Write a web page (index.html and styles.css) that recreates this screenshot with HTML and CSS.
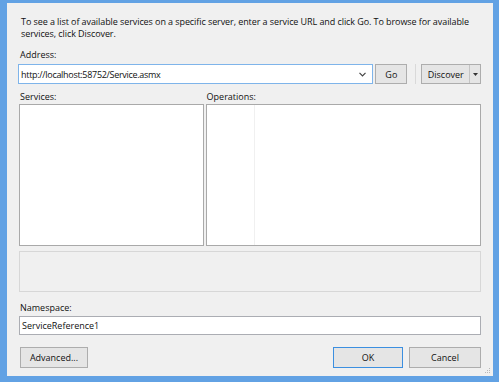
FILE: index.html
```html
<!DOCTYPE html>
<html lang="en">
<head>
  <meta charset="UTF-8">
  <title>Add Service Reference</title>
  <link rel="stylesheet" href="styles.css">
</head>
<body>
  <div class="window">
    <div class="dialog">
      <p class="intro">To see a list of available services on a specific server, enter a service URL and click Go. To browse for available<br>services, click Discover.</p>

      <label class="field-label">Address:</label>
      <div class="address-row">
        <div class="combo">
          <span class="combo-text">http://localhost:58752/Service.asmx</span>
          <svg class="combo-arrow" viewBox="0 0 7 5" width="7" height="5"><path d="M0.5 0.8 L3.5 3.8 L6.5 0.8" fill="none" stroke="#444" stroke-width="1.2"/></svg>
        </div>
        <button class="btn btn-go" type="button">Go</button>
        <div class="vsep"></div>
        <div class="split-btn">
          <span class="split-main">Discover</span>
          <span class="split-arrow"><svg viewBox="0 0 5 3" width="5" height="3"><path d="M0 0 H5 L2.5 3 Z" fill="#333"/></svg></span>
        </div>
      </div>

      <div class="lists-head">
        <label class="field-label services-col">Services:</label>
        <label class="field-label ops-col">Operations:</label>
      </div>
      <div class="lists">
        <div class="listbox services-col"></div>
        <div class="listbox ops-col"><div class="ops-split"></div></div>
      </div>

      <div class="desc-box"></div>

      <label class="field-label ns-label">Namespace:</label>
      <div class="textbox">ServiceReference1</div>

      <div class="footer">
        <button class="btn btn-advanced" type="button">Advanced...</button>
        <div class="footer-right">
          <button class="btn btn-ok" type="button">OK</button>
          <button class="btn btn-cancel" type="button">Cancel</button>
        </div>
      </div>

      <!-- resize grip -->
      <svg class="grip" viewBox="0 0 7 7" width="7" height="7">
        <rect x="5" y="1" width="1" height="1" fill="#b8b8b8"/>
        <rect x="3" y="3" width="1" height="1" fill="#b8b8b8"/>
        <rect x="5" y="3" width="1" height="1" fill="#b8b8b8"/>
        <rect x="1" y="5" width="1" height="1" fill="#b8b8b8"/>
        <rect x="3" y="5" width="1" height="1" fill="#b8b8b8"/>
        <rect x="5" y="5" width="1" height="1" fill="#b8b8b8"/>
      </svg>
    </div>
  </div>
</body>
</html>
```

FILE: styles.css
```css
html, body {
  margin: 0;
  padding: 0;
}
body {
  background: #62a2e4;
  font-family: 'Open Sans', 'Noto Sans', Arial, sans-serif;
  font-size: 9px;
  color: #111;
}
.window {
  width: 499px;
  height: 382px;
  box-sizing: border-box;
  padding: 3px 6px 6px 7px;
}
.dialog {
  position: relative;
  height: 100%;
  box-sizing: border-box;
  background: #f0f0f0;
  padding: 13px 12px 0 12px;
  display: flex;
  flex-direction: column;
}
.intro {
  margin: 0 0 9px 0;
  padding-left: 2px;
  line-height: 12px;
  white-space: nowrap;
  letter-spacing: -0.08px;
}
.field-label {
  display: block;
  line-height: 12px;
  padding-left: 1px;
}
.address-row {
  display: flex;
  align-items: center;
  margin-top: 3px;
  height: 20px;
}
.combo {
  width: 357px;
  height: 20px;
  margin-left: -1px;
  box-sizing: border-box;
  border: 1px solid #7eb4ea;
  background: #fff;
  display: flex;
  align-items: center;
  padding: 0 6px 0 2px;
}
.combo-text {
  flex: 1;
  letter-spacing: -0.3px;
}
.combo-arrow {
  display: block;
}
.btn {
  font-family: inherit;
  font-size: 9px;
  color: #111;
  background: #e5e5e5;
  border: 1px solid #adadad;
  height: 21px;
  padding: 0;
  box-sizing: border-box;
}
.btn-go {
  width: 32px;
  height: 20px;
  margin-left: 2px;
}
.vsep {
  width: 1px;
  height: 20px;
  background: #d9d9d9;
  margin-left: 8px;
}
.split-btn {
  margin-left: 5px;
  width: 60px;
  height: 20px;
  box-sizing: border-box;
  border: 1px solid #adadad;
  background: #e5e5e5;
  display: flex;
}
.split-main {
  width: 47px;
  display: flex;
  align-items: center;
  justify-content: center;
  border-right: 1px solid #c4c4c4;
}
.split-arrow {
  flex: 1;
  display: flex;
  align-items: center;
  justify-content: center;
}
.split-arrow svg {
  display: block;
}
.lists-head {
  display: flex;
  gap: 2px;
  margin-top: 7px;
}
.services-col {
  width: 185px;
  box-sizing: border-box;
}
.ops-col {
  width: 276px;
  box-sizing: border-box;
}
.lists {
  display: flex;
  gap: 2px;
  margin-top: 1px;
  height: 142px;
}
.listbox {
  height: 100%;
  background: #fff;
  border: 1px solid #a9a9a9;
  box-sizing: border-box;
  position: relative;
}
.ops-split {
  position: absolute;
  left: 47px;
  top: 0;
  bottom: 0;
  width: 1px;
  background: #f0f0f0;
}
.desc-box {
  margin-top: 5px;
  height: 41px;
  box-sizing: border-box;
  border: 1px solid #d7d7d7;
  background: #f0f0f0;
}
.ns-label {
  margin-top: 10px;
}
.textbox {
  margin-top: 2px;
  height: 19px;
  box-sizing: border-box;
  border: 1px solid #abadb3;
  background: #fff;
  padding-left: 2px;
  line-height: 17px;
}
.footer {
  display: flex;
  justify-content: space-between;
  margin-top: 12px;
}
.btn-advanced {
  width: 68px;
  margin-left: 1px;
}
.footer-right {
  display: flex;
  gap: 6px;
}
.btn-ok {
  width: 70px;
  border-color: #3c8fe0;
}
.btn-cancel {
  width: 72px;
}
.grip {
  position: absolute;
  right: 2px;
  bottom: 2px;
}
```
